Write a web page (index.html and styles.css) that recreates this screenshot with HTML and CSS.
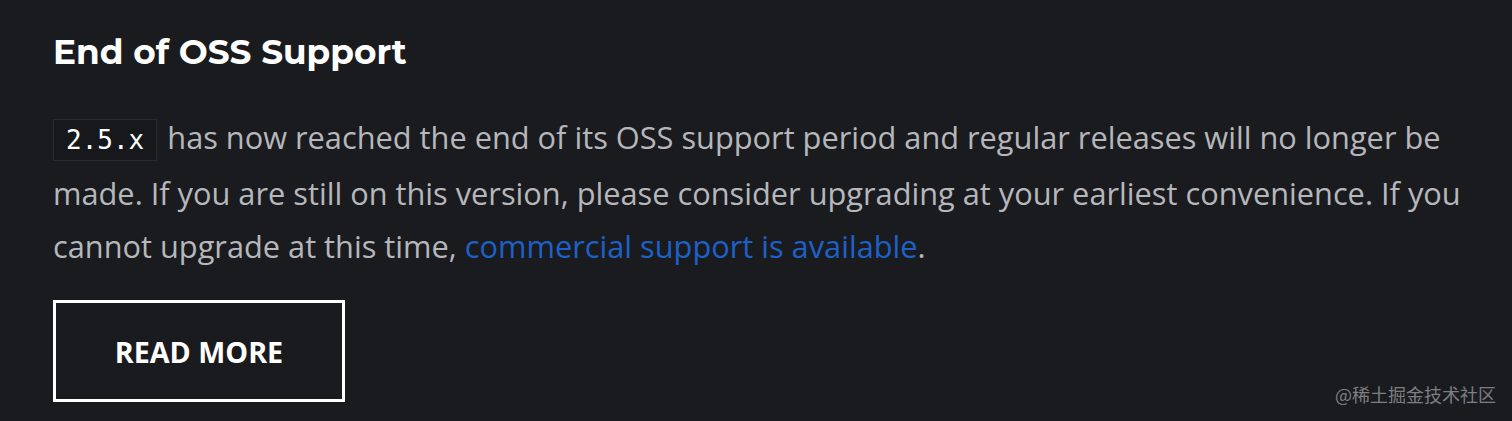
FILE: index.html
```html
<!DOCTYPE html>
<html>
<head>
<meta charset="utf-8">
<link rel="stylesheet" href="styles.css">
</head>
<body>
<div class="card">
  <h2 class="title">End of OSS Support</h2>
  <p class="text"><code class="ver">2.5.x</code> has now reached the end of its OSS support period and regular releases will no longer be made. If you are still on this version, please consider upgrading at your earliest convenience. If you cannot upgrade at this time, <a class="link" href="#">commercial support is available</a>.</p>
  <a class="btn" href="#">READ MORE</a>
  <div class="mark">@稀土掘金技术社区</div>
</div>
</body>
</html>
```

FILE: styles.css
```css
html, body {
  margin: 0;
  padding: 0;
  background: #1a1b1f;
}
.card {
  position: relative;
  width: 1512px;
  height: 421px;
  box-sizing: border-box;
  padding: 31px 40px 0 53px;
  background: #1a1b1f;
  border-radius: 6px;
}
.title {
  margin: 0;
  font-family: "Montserrat", "Inter", "Liberation Sans", sans-serif;
  font-weight: 700;
  font-size: 34.3px;
  line-height: 42px;
  color: #ffffff;
}
.text {
  margin: 38px 0 0 0;
  font-family: "Open Sans", sans-serif;
  font-size: 30.75px;
  line-height: 53px;
  color: #b6b7bb;
}
.ver {
  font-family: "DejaVu Sans Mono", monospace;
  font-size: 26px;
  color: #ffffff;
  background: #17181b;
  border: 1px solid #2a2b30;
  padding: 5px 12px;
  margin-right: 2px;
}
.link {
  color: #1d60c8;
  text-decoration: none;
}
.btn {
  display: inline-flex;
  align-items: center;
  justify-content: center;
  margin-top: 27px;
  width: 292px;
  height: 102px;
  box-sizing: border-box;
  border: 3px solid #ffffff;
  font-family: "Open Sans", sans-serif;
  font-weight: 700;
  font-size: 28.7px;
  color: #ffffff;
  text-decoration: none;
}
.mark {
  position: absolute;
  right: 16px;
  bottom: 14px;
  font-family: "Noto Sans CJK SC", sans-serif;
  font-size: 18px;
  color: #7d7e82;
}
```
